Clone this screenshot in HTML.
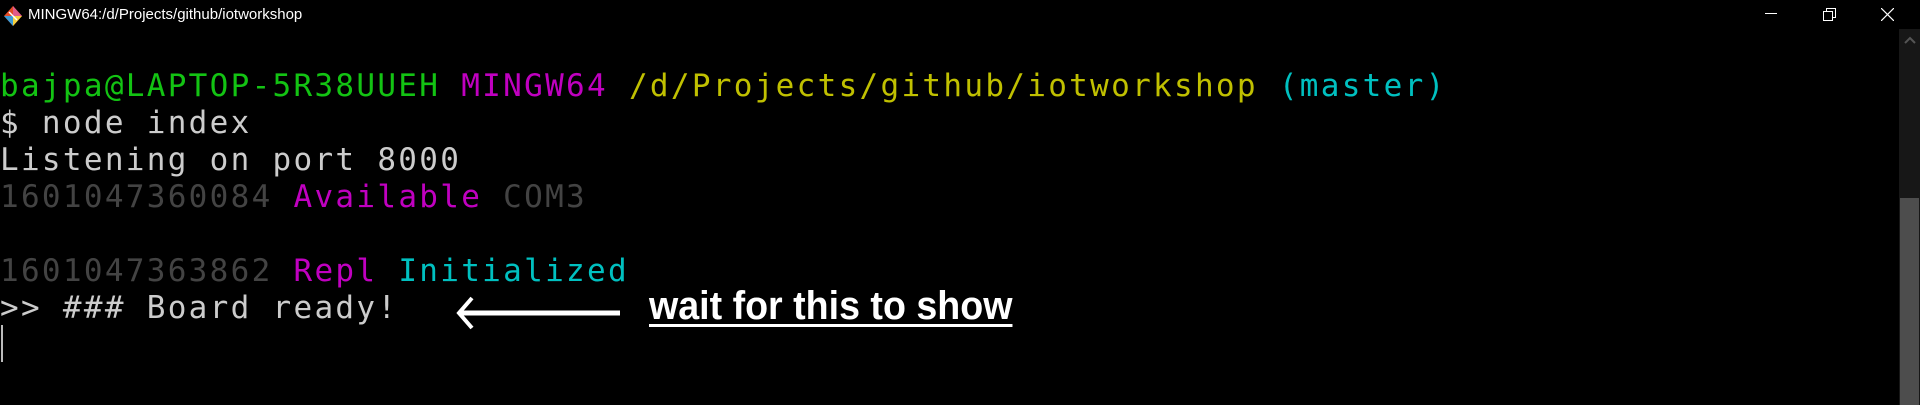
<!DOCTYPE html>
<html><head><meta charset="utf-8"><style>
html,body{margin:0;padding:0;background:#000;width:1920px;height:405px;overflow:hidden;position:relative}
.t{position:absolute;left:0;font-family:"DejaVu Sans Mono","Liberation Mono",monospace;font-size:31px;letter-spacing:2.3px;white-space:pre;line-height:37px;color:#cccccc}
.g{color:#13c313}.m{color:#c000c0}.y{color:#c0c000}.c{color:#00c0c0}.d{color:#434343}
.title{position:absolute;left:28px;top:6px;font-family:"Liberation Sans",sans-serif;font-size:15px;color:#fff}
</style></head><body>
<svg style="position:absolute;left:3px;top:5px" width="20" height="22" viewBox="0 0 20 22">
<polygon points="10,1 19,11 10,21 1,11" fill="#e34c26"/>
<polygon points="10,11 19,11 10,21" fill="#f4d03f"/>
<polygon points="1,11 10,11 10,21" fill="#3c9bd6"/>
<polygon points="10,1 19,11 10,11" fill="#e05b8a"/>
<line x1="6" y1="7" x2="14" y2="15" stroke="#fff" stroke-width="1.5"/>
</svg>
<div class="title">MINGW64:/d/Projects/github/iotworkshop</div>
<div style="position:absolute;left:1765px;top:13px;width:12px;height:1px;background:#fff"></div>
<svg style="position:absolute;left:1823px;top:8px" width="14" height="14"><rect x="0.5" y="3.5" width="9" height="9" fill="none" stroke="#fff"/><path d="M3.5 3.5V0.5H12.5V9.5H9.5" fill="none" stroke="#fff"/></svg>
<svg style="position:absolute;left:1881px;top:8px" width="13" height="13"><path d="M0 0L13 13M13 0L0 13" stroke="#fff" stroke-width="1.2"/></svg>
<div style="position:absolute;left:1899px;top:29px;width:21px;height:376px;background:#171717"></div>
<div style="position:absolute;left:1900px;top:198px;width:19px;height:207px;background:#4d4d4d"></div>
<svg style="position:absolute;left:1904px;top:36px" width="12" height="8"><path d="M1 7L6 2L11 7" fill="none" stroke="#555" stroke-width="2"/></svg>

<div class="t" style="top:68px"><span class="g">bajpa@LAPTOP-5R38UUEH</span> <span class="m">MINGW64</span> <span class="y">/d/Projects/github/iotworkshop</span> <span class="c">(master)</span></div>
<div class="t" style="top:105px">$ node index</div>
<div class="t" style="top:142px">Listening on port 8000</div>
<div class="t" style="top:179px"><span class="d">1601047360084</span> <span class="m">Available</span> <span class="d">COM3</span></div>
<div class="t" style="top:253px"><span class="d">1601047363862</span> <span class="m">Repl</span> <span class="c">Initialized</span></div>
<div class="t" style="top:290px">&gt;&gt; ### Board ready!</div>
<div style="position:absolute;left:1px;top:325px;width:2px;height:37px;background:#bbb"></div>

<svg style="position:absolute;left:452px;top:295px" width="170" height="36"><path d="M168 18H8" stroke="#fff" stroke-width="5"/><path d="M20 3L7 18L20 33" fill="none" stroke="#fff" stroke-width="4"/></svg>
<div style="position:absolute;left:649px;top:284px;font-family:'Liberation Sans',sans-serif;font-weight:bold;font-size:40px;color:#fff;white-space:nowrap;transform:scaleX(0.94);transform-origin:0 0;letter-spacing:0;text-decoration:underline;text-decoration-thickness:3px;text-underline-offset:5px">wait for this to show</div>
</body></html>
